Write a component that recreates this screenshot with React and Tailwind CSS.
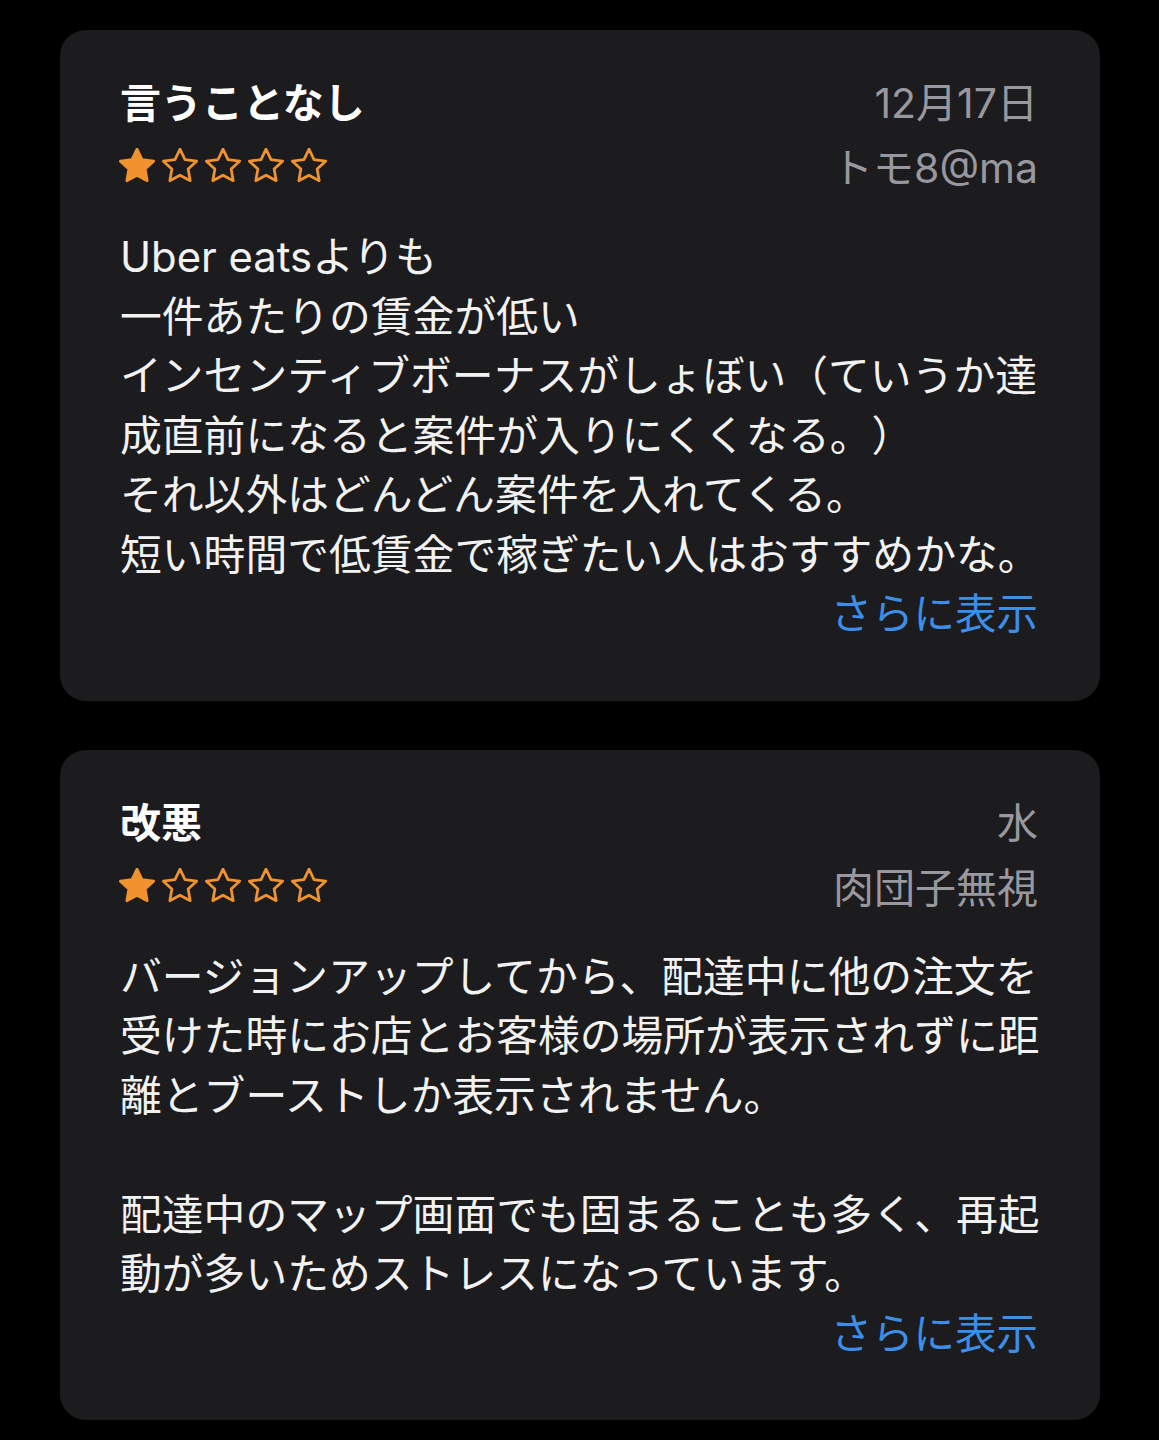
import React from "react";

const FONT = { fontFamily: '"Inter", "Noto Sans CJK JP", sans-serif' };

function Star({ filled }) {
  return (
    <svg width="36" height="36" viewBox="1.6 1.6 20.8 20.8" className="shrink-0">
      <polygon
        points="12,2.2 14.9,8.3 21.6,9.2 16.7,13.8 17.9,20.5 12,17.3 6.1,20.5 7.3,13.8 2.4,9.2 9.1,8.3"
        fill={filled ? "#f0932e" : "none"}
        stroke="#f0932e"
        strokeWidth="1.6"
        strokeLinejoin="round"
      />
    </svg>
  );
}

function Card({ title, date, author, lines }) {
  return (
    <div className="bg-[#1c1c1e] rounded-[26px] pl-[60px] pr-[62px] pt-[43px] pb-[56px] [text-spacing-trim:space-all]">
      <div className="flex justify-between items-center h-[60px]">
        <div className="text-white font-bold text-[41px] leading-[60px] whitespace-nowrap">{title}</div>
        <div className="text-[#98989e] text-[41px] leading-[60px] whitespace-nowrap">{date}</div>
      </div>
      <div className="flex justify-between items-center h-[60px] mt-[5px]">
        <div className="flex gap-[7px] items-center -ml-[1px] -mt-[4px]">
          <Star filled />
          <Star />
          <Star />
          <Star />
          <Star />
        </div>
        <div className="text-[#98989e] text-[41px] leading-[60px] whitespace-nowrap">{author}</div>
      </div>
      <div className="mt-[30px] text-[#f2f2f2] text-[41.8px] leading-[59.5px]">
        {lines.map((l, i) => (
          <div key={i} className="whitespace-nowrap h-[59.5px]">
            {l}
          </div>
        ))}
      </div>
      <div className="text-right text-[#3d8ee8] text-[41.5px] leading-[59.5px]">さらに表示</div>
    </div>
  );
}

export default function App() {
  return (
    <div className="bg-black min-h-[1440px] w-[1159px] pt-[30px] pl-[60px] pr-[59px] flex flex-col gap-[49px]" style={FONT}>
      <Card
        title="言うことなし"
        date="12月17日"
        author="トモ8@ma"
        lines={[
          "Uber eatsよりも",
          "一件あたりの賃金が低い",
          "インセンティブボーナスがしょぼい（ていうか達",
          "成直前になると案件が入りにくくなる。）",
          "それ以外はどんどん案件を入れてくる。",
          "短い時間で低賃金で稼ぎたい人はおすすめかな。",
        ]}
      />
      <Card
        title="改悪"
        date="水"
        author="肉団子無視"
        lines={[
          "バージョンアップしてから、配達中に他の注文を",
          "受けた時にお店とお客様の場所が表示されずに距",
          "離とブーストしか表示されません。",
          "",
          "配達中のマップ画面でも固まることも多く、再起",
          "動が多いためストレスになっています。",
        ]}
      />
    </div>
  );
}
